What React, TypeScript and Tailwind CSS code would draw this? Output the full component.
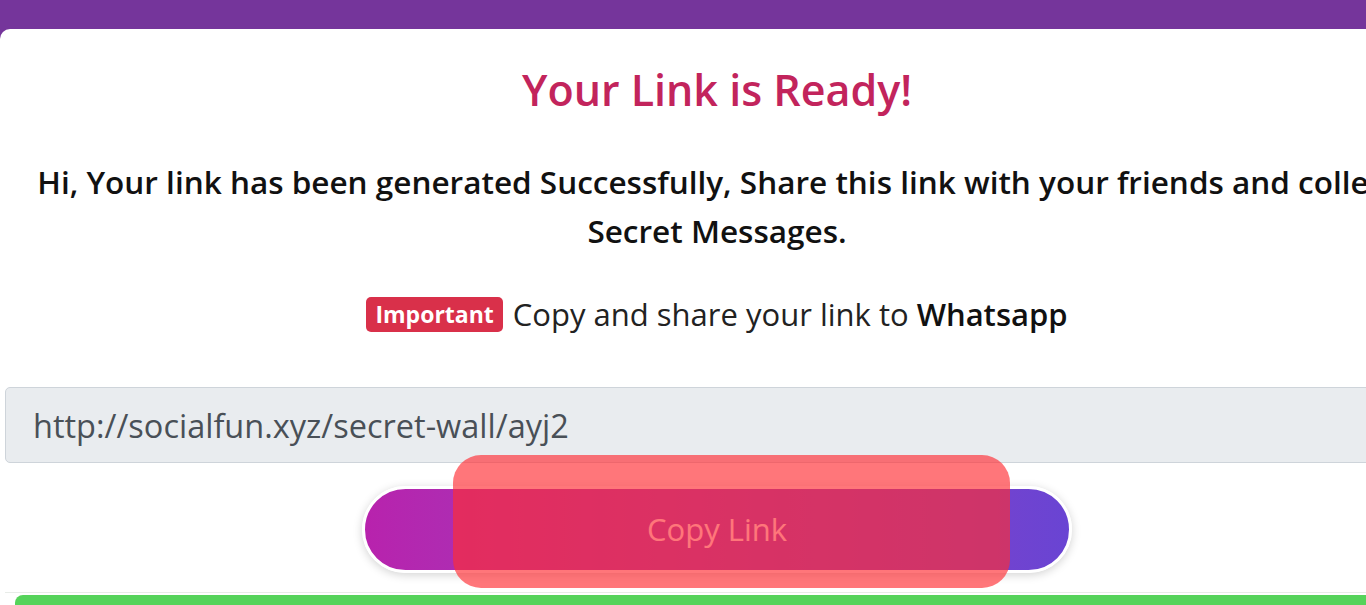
import React from 'react';

const App: React.FC = () => {
  return (
    <div className="w-full h-screen overflow-hidden bg-[#75359b]" style={{ fontFamily: '"Open Sans", "Noto Sans", sans-serif' }}>
      <div className="h-[29px]" />
      {/* Link card */}
      <div className="relative w-[1434px] min-h-[600px] bg-white rounded-tl-[10px] px-[5px] pt-[34px]">
        <h2 className="text-center text-[43px] leading-[54px] font-semibold text-[#c2245c]">Your Link is Ready!</h2>

        <p className="mt-[40px] text-center text-[31.5px] leading-[49px] font-semibold text-[#111] whitespace-nowrap">
          Hi, Your link has been generated Successfully, Share this link with your friends and collect
          <br />
          Secret Messages.
        </p>

        <div className="mt-[39px] flex items-center justify-center gap-[10px] h-[40px]">
          <span className="bg-[#d9304a] text-white text-[23px] leading-[35px] font-bold px-[9px] rounded-[5px]">Important</span>
          <span className="text-[31px] text-[#222]">
            Copy and share your link to <strong className="font-semibold text-[#111]">Whatsapp</strong>
          </span>
        </div>

        <input
          readOnly
          value="http://socialfun.xyz/secret-wall/ayj2"
          className="mt-[53px] block w-full h-[76px] bg-[#e9ecef] border border-[#ced4da] rounded-[5px] px-[27px] text-[32.5px] text-[#495057] outline-none"
        />

        <div className="mt-[23px] flex justify-center">
          <button className="w-[710px] h-[87px] rounded-full border-[3px] border-white shadow-[0_2px_10px_rgba(0,0,0,0.18)] bg-gradient-to-r from-[#b822ad] to-[#6944d3] text-white text-[31px] font-medium">
            Copy Link
          </button>
        </div>

        <div className="mt-[19px] border-t border-[#e8ece8] pt-[2px] pl-[10px]">
          <div className="h-[40px] bg-[#55d35a] rounded-tl-[8px]" />
        </div>

        {/* highlight overlay */}
        <div className="absolute left-[453px] top-[426px] w-[557px] h-[133px] rounded-[28px] bg-[rgba(255,45,50,0.65)]" />
      </div>
    </div>
  );
};

export default App;
